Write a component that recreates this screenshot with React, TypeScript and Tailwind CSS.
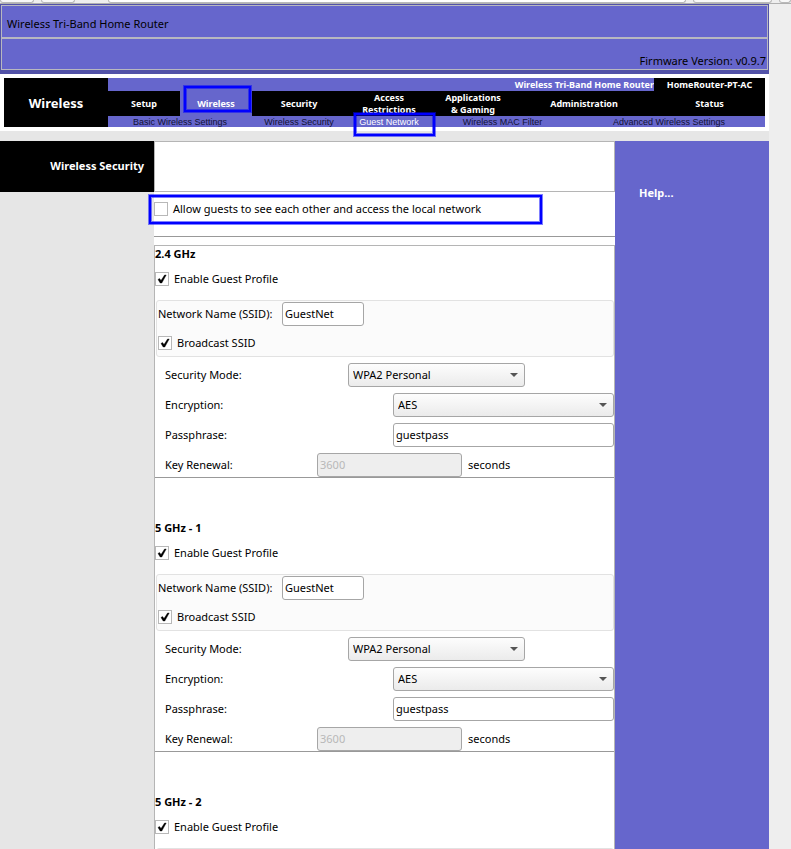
import { useId } from "react";
import type { ReactNode } from "react";
import clsx from "clsx";

const tabs = ["Setup", "Wireless", "Security", "Access Restrictions", "Applications & Gaming", "Administration", "Status"];
const bands = ["2.4 GHz", "5 GHz - 1", "5 GHz - 2"];

function Toolbar() {
  const edge = "rounded-b-[3px] border-x border-b border-[#b9b9b9]";
  return (
    <div className="flex h-1 shrink-0 items-start gap-[7px] border-b border-[#b0b0b0] bg-[#eeeeee]">
      <div className={clsx(edge, "h-[3px] w-[34px] bg-[#f8f8f8]")} />
      <div className={clsx(edge, "h-[3px] w-[34px] bg-[#f8f8f8]")} />
      <div className={clsx(edge, "ml-[26px] h-[3px] flex-1 bg-white")} />
      <div className={clsx(edge, "h-[3px] w-[79px] bg-[#f8f8f8]")} />
      <div className={clsx(edge, "h-[3px] w-[12px] bg-[#f8f8f8]")} />
    </div>
  );
}

function Highlight({ className }: { className: string }) {
  return (
    <div
      className={clsx(
        "pointer-events-none absolute z-10 border-2 border-[#0000ff] shadow-[0_0_0_1px_#0000ff80,inset_0_0_0_1px_#0000ff80]",
        className,
      )}
    />
  );
}

function CheckBox({ label, checked = false }: { label: string; checked?: boolean }) {
  return (
    <label className="flex h-[14px] items-center gap-[5px]">
      <span className="grid size-[14px] place-items-center">
        <input
          type="checkbox"
          defaultChecked={checked}
          className="peer col-start-1 row-start-1 size-[14px] appearance-none border border-[#b8b8b8] bg-white"
        />
        <svg viewBox="0 0 14 14" className="pointer-events-none invisible col-start-1 row-start-1 size-[14px] peer-checked:visible">
          <path d="M3 7.4 L4.6 6.6 L6 8.6 L9.6 3 H11.2 L6.8 11 H5.2 Z" fill="#000" stroke="#000" strokeWidth="0.4" />
        </svg>
      </span>
      {label}
    </label>
  );
}

function Field({ label, labelClass, children }: { label: string; labelClass: string; children: (id: string) => ReactNode }) {
  const id = useId();
  return (
    <div className="flex h-6 items-center">
      <label htmlFor={id} className={clsx("shrink-0", labelClass)}>
        {label}
      </label>
      {children(id)}
    </div>
  );
}

function TextBox({ id, value, className, disabled }: { id: string; value: string; className: string; disabled?: boolean }) {
  return (
    <input
      id={id}
      type="text"
      defaultValue={value}
      disabled={disabled}
      className={clsx(
        "h-6 min-w-0 rounded-[3px] border border-[#a6a6a6] bg-white px-0.5 pb-0.5 disabled:bg-[#eeeeee] disabled:text-[#b8b8b8]",
        className,
      )}
    />
  );
}

function Select({ id, options, className }: { id: string; options: string[]; className: string }) {
  return (
    <div className={clsx("grid items-center", className)}>
      <select
        id={id}
        className="col-start-1 row-start-1 h-6 w-full appearance-none rounded-[3px] border border-[#a6a6a6] bg-linear-to-b from-[#fdfdfd] to-[#ebebeb] px-1"
      >
        {options.map((o) => (
          <option key={o}>{o}</option>
        ))}
      </select>
      <svg viewBox="0 0 8 4" className="pointer-events-none col-start-1 row-start-1 mr-[7px] h-1 w-2 justify-self-end">
        <path d="M0 0H8L4 4Z" fill="#555" />
      </svg>
    </div>
  );
}

function Band({ name }: { name: string }) {
  return (
    <section className="pb-[42px]">
      <h2 className="h-[26px] font-bold">{name}</h2>
      <CheckBox label="Enable Guest Profile" checked />
      <div className="mt-[14px] ml-px h-[57px] rounded-[3px] border border-[#e2e2e2] bg-[#fbfbfb] px-px pt-px">
        <Field label="Network Name (SSID):" labelClass="w-[124px]">
          {(id) => <TextBox id={id} value="GuestNet" className="w-[82px]" />}
        </Field>
        <div className="pt-[10px]">
          <CheckBox label="Broadcast SSID" checked />
        </div>
      </div>
      <div className="mt-1.5 flex flex-col gap-1.5 border-b border-[#999999] pl-[10px]">
        <Field label="Security Mode:" labelClass="w-[183px]">
          {(id) => <Select id={id} options={["WPA2 Personal", "Disabled"]} className="w-[177px]" />}
        </Field>
        <Field label="Encryption:" labelClass="w-[228px]">
          {(id) => <Select id={id} options={["AES", "TKIP"]} className="flex-1" />}
        </Field>
        <Field label="Passphrase:" labelClass="w-[228px]">
          {(id) => <TextBox id={id} value="guestpass" className="flex-1" />}
        </Field>
        <Field label="Key Renewal:" labelClass="w-[152px]">
          {(id) => (
            <>
              <TextBox id={id} value="3600" disabled className="w-[145px]" />
              <span className="ml-1.5">seconds</span>
            </>
          )}
        </Field>
      </div>
    </section>
  );
}

function Nav() {
  return (
    <nav className="flex bg-white p-1 text-[9px] font-bold text-white">
      <div className="flex w-[104px] items-center justify-center bg-black text-[13px]">Wireless</div>
      <div className="flex-1 bg-[#6666cc]">
        <div className="flex h-[13px] leading-[13px]">
          <div className="flex-1 text-right">Wireless Tri-Band Home Router</div>
          <div className="w-[111px] bg-black text-center">HomeRouter-PT-AC</div>
        </div>
        <div className="grid h-[25px] grid-cols-[72fr_72fr_94fr_86fr_82fr_140fr_111fr] leading-[12px]">
          {tabs.map((tab) => (
            <div key={tab} className={clsx("relative flex", tab !== "Wireless" && "bg-black")}>
              <a href="#" className="flex flex-1 items-center justify-center px-3 text-center">
                {tab}
              </a>
              {tab === "Wireless" && <Highlight className="-top-[5px] right-px bottom-1 left-1" />}
            </div>
          ))}
        </div>
        <div className="grid h-[11px] grid-cols-[144fr_94fr_86fr_141fr_192fr] text-center font-['Liberation_Sans',sans-serif] leading-[13px] font-normal text-[#111133]">
          <a href="#">Basic Wireless Settings</a>
          <a href="#">Wireless Security</a>
          <div className="relative text-white">
            <a href="#">Guest Network</a>
            <Highlight className="-top-[3px] -right-[3px] -bottom-[7px] left-2" />
          </div>
          <a href="#">Wireless MAC Filter</a>
          <a href="#">Advanced Wireless Settings</a>
        </div>
      </div>
    </nav>
  );
}

export default function App() {
  return (
    <div className="flex min-h-screen flex-col bg-[#eeeeee] font-['Noto_Sans',sans-serif] text-[11px] leading-4 text-black">
      <Toolbar />
      <div className="mr-[22px] flex flex-1 flex-col bg-[#e6e6e6]">
        <header className="border border-b-4 border-[#5252a8] bg-[#6666cc]">
          <div className="border border-[#b8b8c0]">
            <h1 className="flex h-[33px] items-center border-b-2 border-[#b8b8c0] px-[5px] pt-1">Wireless Tri-Band Home Router</h1>
            <p className="flex h-[30px] items-end justify-end pr-px">Firmware Version: v0.9.7</p>
          </div>
        </header>
        <Nav />
        <div className="mt-[10px] flex flex-1">
          <aside className="w-[154px] shrink-0">
            <div className="flex h-[51px] items-center justify-end bg-black pr-[10px] pb-0.5 font-bold text-white">Wireless Security</div>
          </aside>
          <main className="flex-1 bg-white">
            <div className="h-[51px] border border-[#b5b5b5]" />
            <div className="relative h-[45px] border-b border-[#999999] pt-[10px]">
              <CheckBox label="Allow guests to see each other and access the local network" />
              <Highlight className="top-[3px] right-[73px] bottom-[12px] -left-[5px]" />
            </div>
            <div className="mt-2 border border-[#b5b5b5]">
              {bands.map((name) => (
                <Band key={name} name={name} />
              ))}
            </div>
          </main>
          <aside className="w-[154px] shrink-0 bg-[#6666cc] pt-11 pl-6">
            <a href="#" className="font-bold text-white">Help...</a>
          </aside>
        </div>
      </div>
    </div>
  );
}
